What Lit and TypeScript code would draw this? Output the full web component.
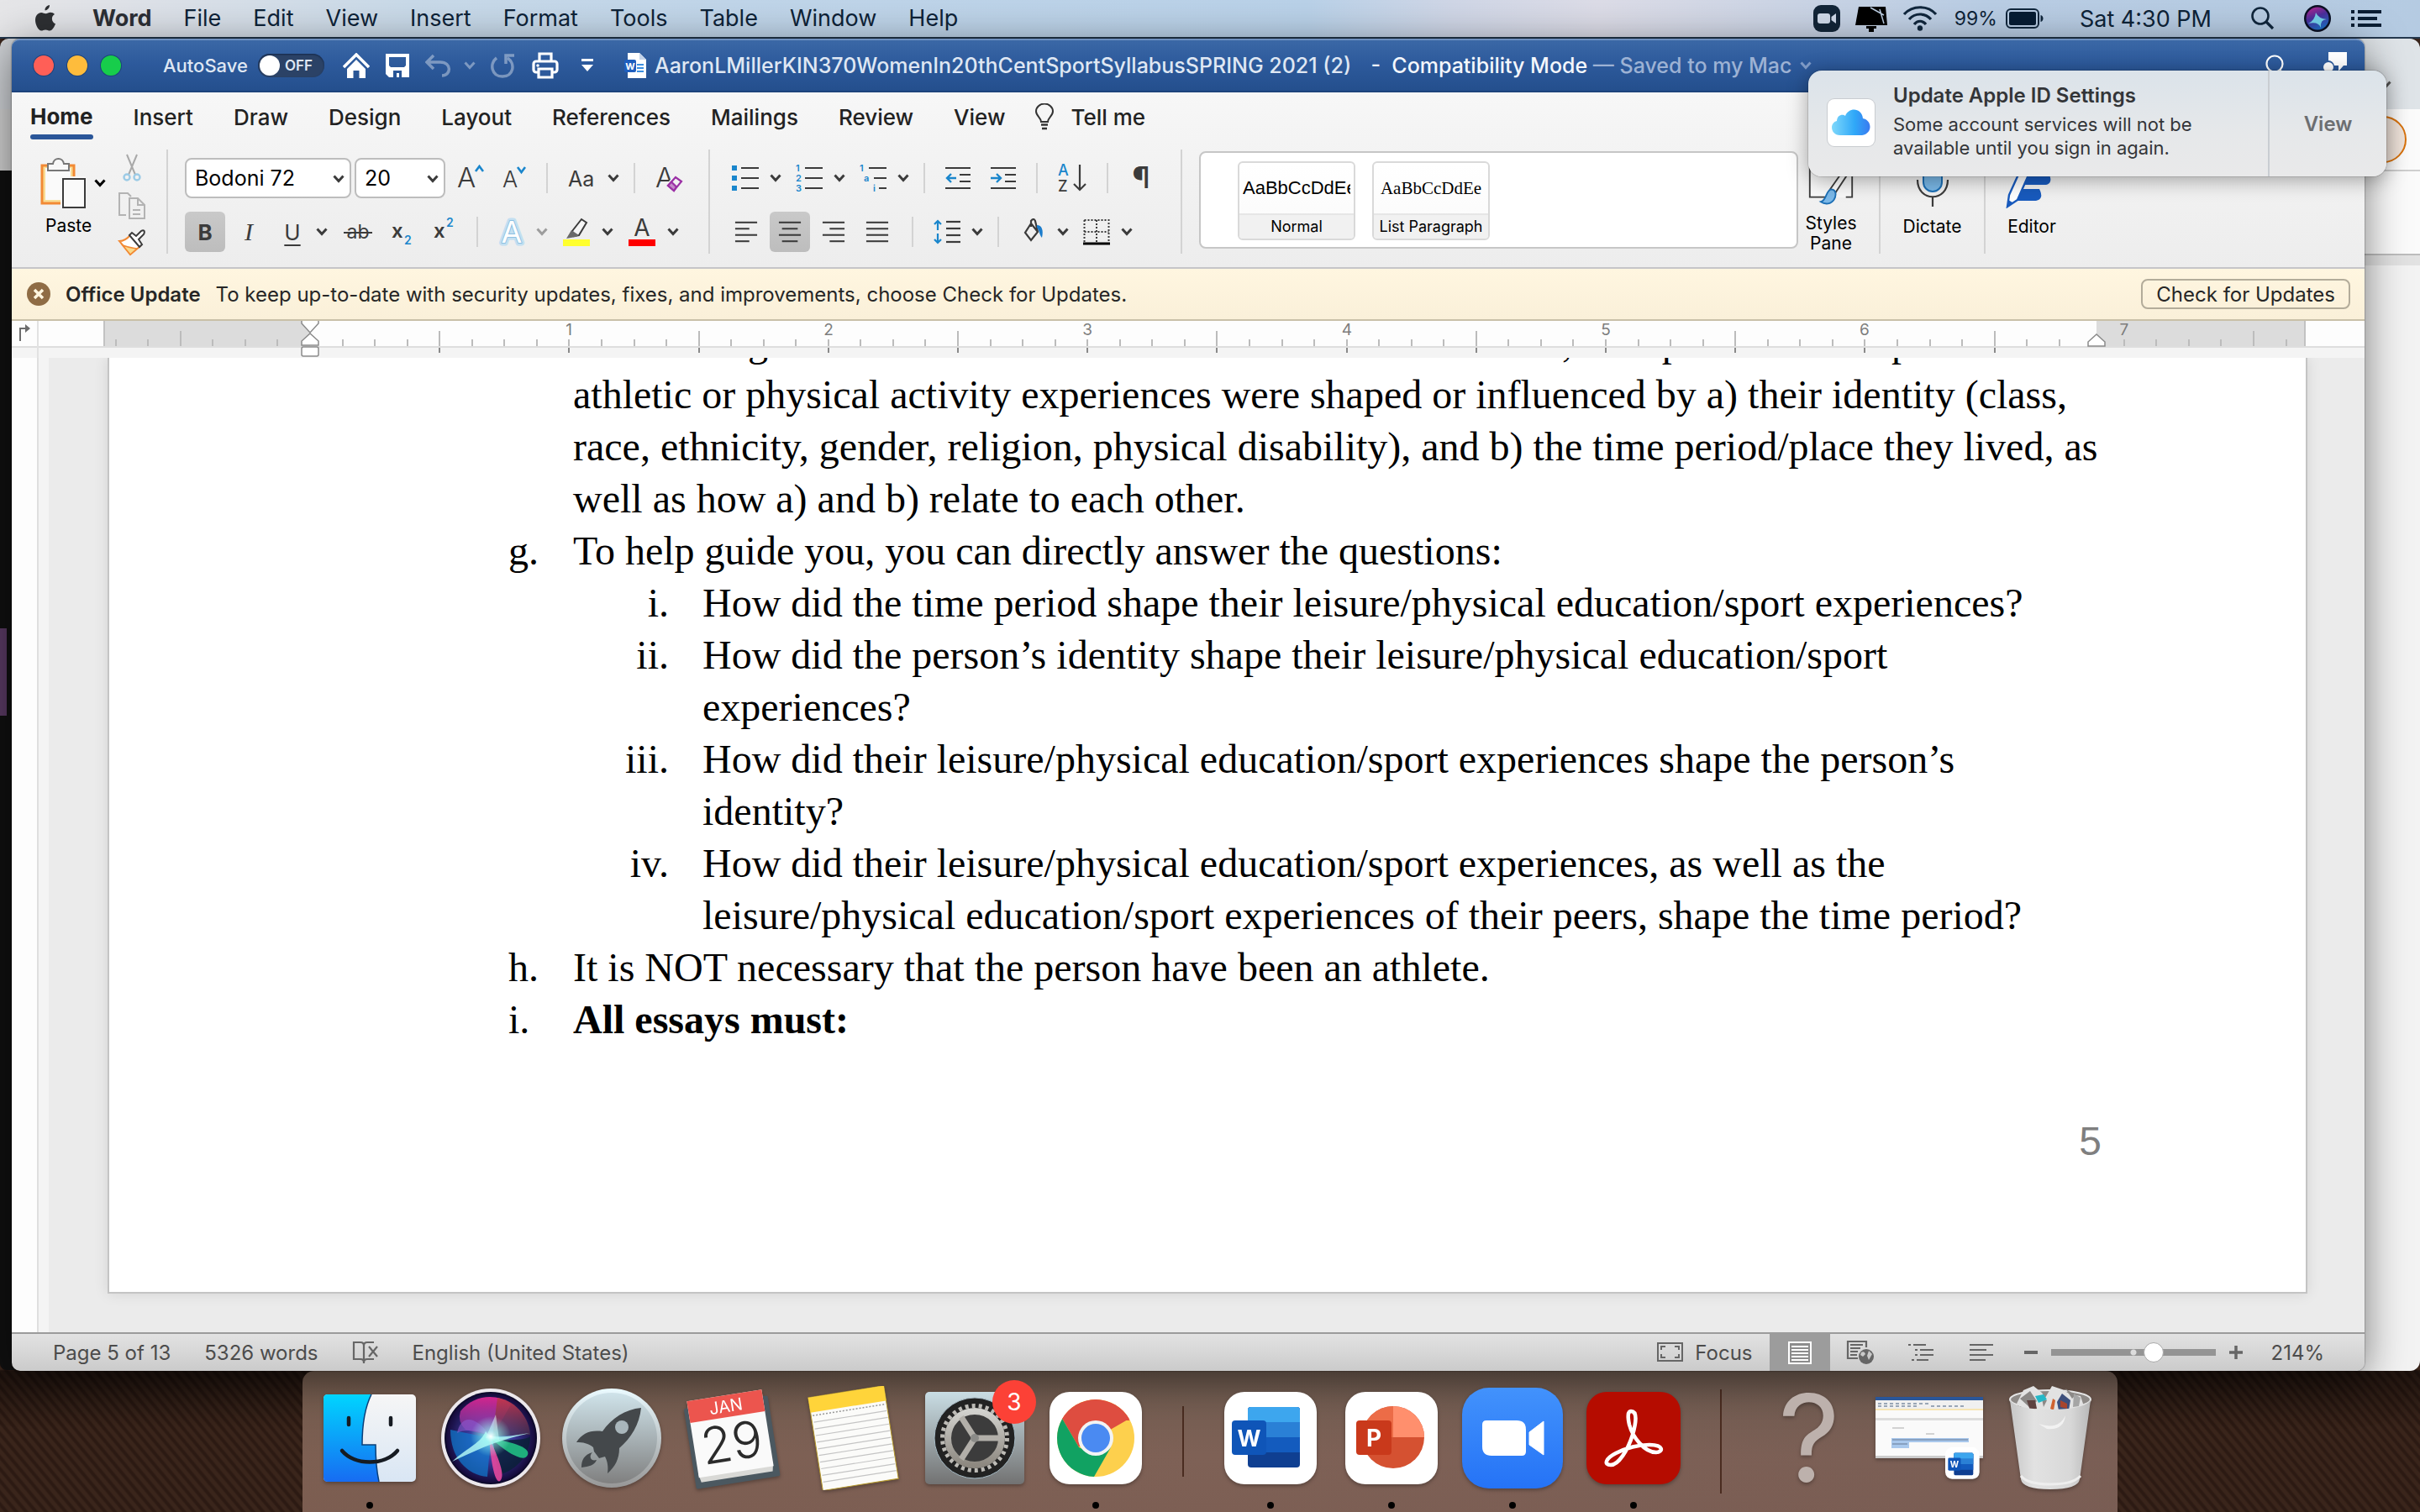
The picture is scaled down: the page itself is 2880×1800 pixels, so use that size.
import { LitElement, html, svg, css } from "lit";
import { customElement } from "lit/decorators.js";

const chev = html`<svg class="chev" width="14" height="10" viewBox="0 0 14 10"><path d="M1.5 1.5 7 7.5 12.5 1.5" fill="none" stroke="currentColor" stroke-width="3" /></svg>`;
const BLUE = "#1a86cc";
const INK = "#3b3b3b";

/* ---------- menu bar ---------- */
@customElement("menu-bar")
class MenuBar extends LitElement {
  static styles = css`
    :host { display: block; font-family: Inter, "Liberation Sans", sans-serif; }
    .bar { display: flex; align-items: center; height: 44px; padding: 0 46px 0 40px; color: #0e2338;
      border-bottom: 2px solid #24384e;
      background: linear-gradient(90deg, #e6e6e8 0%, #dfe2e8 5%, #c8d9e8 17%, #c0d5e9 30%, #b9d1e8 54%, #cfd6e6 60%, #dcdce7 66%, #cdd5e5 73%, #b9cde4 82%, #b5cbe2 100%); }
    nav { display: flex; align-items: center; gap: 38px; flex: 1; }
    button { all: unset; font-size: 27px; line-height: 44px; white-space: nowrap; display: block; }
    .app { font-weight: 700; color: #2c2f35; }
    .logo { margin-right: 4px; height: 44px; display: flex; align-items: center; }
    .right { display: flex; align-items: center; }
    .pct { font-size: 23px; margin-left: 20px; margin-right: 10px; }
    .clock { font-size: 27px; margin: 0 46px 0 42px; white-space: nowrap; }
    svg { display: block; }
    .gap { margin-left: 18px; }
    .sir { margin: 0 24px 0 34px; }
  `;
  render() {
    const items = ["File", "Edit", "View", "Insert", "Format", "Tools", "Table", "Window", "Help"];
    return html`<div class="bar">
      <nav>
        <button class="logo" aria-label="Apple menu"><svg width="28" height="34" viewBox="0 0 28 34"><path fill="#2e3033" d="M19 1c.3 3-2.4 6.400-5.500 6.300C13.200 4.400 16 1.200 19 1zM25 12c-2 1.300-3.200 3.100-3.100 5.400.1 2.900 1.700 4.800 4.100 5.800-.9 3-3.800 8.300-6.800 8.300-1.900 0-2.600-1.100-5-1.100s-3.200 1.100-5 1.100C5.600 31.500 2 24.400 2 19c0-5.500 3.300-9.100 7.200-9.100 2.100 0 3.500 1.300 5.300 1.300 1.700 0 3.200-1.400 5.600-1.400 1.900 0 3.700.8 4.900 2.200z"/></svg></button>
        <button class="app">Word</button>
        ${items.map((t) => html`<button>${t}</button>`)}
      </nav>
      <div class="right">
        <svg width="32" height="32" viewBox="0 0 32 32"><rect width="32" height="32" rx="9" fill="#122538"/><rect x="5" y="10" width="15" height="12" rx="3" fill="#cfdaea"/><path d="M21.500 14 27 10v12l-5.500-4z" fill="#cfdaea"/></svg>
        <svg class="gap" width="38" height="32" viewBox="0 0 38 32"><path d="M4 2h32l2 22H0z" fill="#000"/><path d="M13 25h12v3h-3v4h-6v-4h-3z" fill="#000"/><path d="M18 3 34 12M29 5l5 17" stroke="#b9cbe0" stroke-width="1.500" fill="none"/></svg>
        <svg class="gap" width="42" height="30" viewBox="0 0 42 30"><g fill="none" stroke="#10263c" stroke-width="3.200"><path d="M2 10C12-1 30-1 40 10"/><path d="M8 16C15 8 27 8 34 16"/><path d="M14 22c4-5 10-5 14 0"/></g><circle cx="21" cy="26.500" r="3.200" fill="#10263c"/></svg>
        <span class="pct">99%</span>
        <svg width="46" height="24" viewBox="0 0 46 24"><rect x="1" y="1" width="38" height="22" rx="5" fill="none" stroke="#10263c" stroke-width="2"/><rect x="4" y="4" width="32" height="16" rx="2" fill="#071c33"/><path d="M41.500 8c4 1 4 7 0 8z" fill="#10263c"/></svg>
        <span class="clock">Sat 4:30 PM</span>
        <svg width="30" height="30" viewBox="0 0 30 30"><circle cx="12" cy="12" r="9.500" fill="none" stroke="#10263c" stroke-width="2.600"/><path d="m19 19 8 8" stroke="#10263c" stroke-width="3.200"/></svg>
        <svg class="sir" width="32" height="32" viewBox="0 0 32 32"><defs><linearGradient id="s" x1=".2" y1="0" x2=".6" y2="1"><stop offset="0" stop-color="#b0268f"/><stop offset=".45" stop-color="#4a2f9c"/><stop offset="1" stop-color="#1d6fc8"/></linearGradient></defs><circle cx="16" cy="16" r="16" fill="#0a1024"/><circle cx="16" cy="16" r="13.500" fill="url(#s)"/><path d="M5 22q8-4 9-13 3 7 13 8-8 0-7 10-3-8-15-5z" fill="#7feaf5" opacity=".85"/></svg>
        <svg width="36" height="22" viewBox="0 0 36 22"><g fill="#0a1e34"><path d="M0 1h4v4H0zM8 1h28v4H8zM0 9h4v4H0zM8 9h23v4H8zM0 17h4v4H0zM8 17h28v4H8z"/></g></svg>
      </div>
    </div>`;
  }
}

/* ---------- window title bar ---------- */
@customElement("title-bar")
class TitleBar extends LitElement {
  static styles = css`
    :host { display: block; font-family: Inter, "Liberation Sans", sans-serif; }
    .bar { height: 64px; box-sizing: border-box; display: flex; align-items: center; padding: 0 20px 0 26px; color: #dfe7f3;
      background: linear-gradient(#3b68a6, #2d5a9c 45%, #244f8d); border-top: 2px solid #6d8fbf; border-bottom: 2px solid #1d437c; border-radius: 10px 10px 0 0; }
    button { all: unset; display: block; }
    svg { display: block; }
    .lights { display: flex; gap: 16px; }
    .light { width: 24px; height: 24px; border-radius: 50%; box-shadow: 0 0 0 1px #1e437a; }
    .r { background: #ff5f57; } .y { background: #febc3c; } .g { background: #17cd4b; }
    .auto { display: flex; align-items: center; gap: 12px; margin-left: 50px; font-size: 22px; font-weight: 500; }
    .toggle { appearance: none; margin: 0; width: 79px; height: 28px; border-radius: 14px; background: #2b4266; position: relative; box-shadow: inset 0 1px 2px #14284a; }
    .toggle::before { content: ""; position: absolute; left: 2px; top: 2px; width: 24px; height: 24px; border-radius: 50%; background: #fff; }
    .toggle::after { content: "OFF"; position: absolute; left: 32px; top: 0; font: 600 17px/28px Inter, sans-serif; color: #dfe7f3; }
    .quick { display: flex; align-items: center; gap: 19px; margin-left: 22px; color: #fff; }
    .quick .chev { margin: 0 -1px 0 -5px; }
    .dim { opacity: .38; }
    .quick .last { margin-left: 7px; }
    .title { display: flex; align-items: center; margin-left: 36px; font-size: 25px; font-weight: 500; white-space: pre; flex: 1; }
    .title .doc { margin-right: 10px; }
    .strong { font-weight: 500; color: #f4f7fc; margin-left: 10px; }
    .saved { color: #9db2d4; font-weight: 500; margin-right: 10px; }
    .title .chev { color: #7f9bc7; }
    .end { display: flex; align-items: center; gap: 44px; }
  `;
  render() {
    return html`<div class="bar">
      <div class="lights"><button class="light r" aria-label="Close"></button><button class="light y" aria-label="Minimise"></button><button class="light g" aria-label="Zoom window"></button></div>
      <label class="auto">AutoSave<input class="toggle" type="checkbox" /></label>
      <div class="quick">
        <button aria-label="Home"><svg width="32" height="30" viewBox="0 0 32 30"><path d="M1 17 16 2l15 15" fill="none" stroke="#fff" stroke-width="3.500"/><path d="M5 19 16 8l11 11v11h-7.500v-9h-7v9H5z" fill="#fff"/></svg></button>
        <button aria-label="Save"><svg width="28" height="28" viewBox="0 0 28 28"><path d="M0 0h28v28H4l-4-4zM4 4v10l2 2h16l2-2V4zM9 20v8h4v-5h3v5h3v-8z" fill="#fff" fill-rule="evenodd"/></svg></button>
        <button class="dim" aria-label="Undo"><svg width="32" height="28" viewBox="0 0 32 28"><path d="M10 2 2 10l8 8M3 10h15c14 0 13 16 2 16" fill="none" stroke="#fff" stroke-width="3.500"/></svg></button>
        <button class="dim" aria-label="Undo options">${chev}</button>
        <button class="dim" aria-label="Redo"><svg width="30" height="30" viewBox="0 0 30 30"><path d="M7 6C-2 13 1 28 14 28s16-15 6-22" fill="none" stroke="#fff" stroke-width="3.500"/><path d="M18 13V3h10" fill="none" stroke="#fff" stroke-width="3.500"/></svg></button>
        <button aria-label="Print"><svg width="32" height="32" viewBox="0 0 32 32"><g fill="none" stroke="#fff" stroke-width="3.200"><path d="M9 11V2h14v9"/><rect x="2" y="11" width="28" height="13" rx="3"/><path d="M8 20h16v10H8z" fill="#2d5a9c"/></g><circle cx="7" cy="16" r="1.800" fill="#fff"/></svg></button>
        <button class="last" aria-label="Customise toolbar"><svg width="16" height="16" viewBox="0 0 16 16"><path d="M1 0h14v3H1zM1 7h14l-7 8z" fill="#fff"/></svg></button>
      </div>
      <div class="title">
        <svg class="doc" width="26" height="30" viewBox="0 0 26 30"><path d="M4 0h14l8 8v22H4z" fill="#fff"/><path d="M18 0v8h8z" fill="#c4d4ea"/><path d="M15 14h8M15 18h8M15 22h8" stroke="#3c8fe0" stroke-width="2"/><rect y="8" width="14" height="15" rx="2" fill="#1f5fbf"/><text x="7" y="20" text-anchor="middle" font-family="Inter" font-weight="700" font-size="11" fill="#fff">W</text></svg><span>AaronLMillerKIN370WomenIn20thCentSportSyllabusSPRING 2021 (2)</span><span class="strong">  -  Compatibility Mode</span><span class="saved"> — Saved to my Mac</span>${chev}
      </div>
      <div class="end">
        <button aria-label="Search"><svg width="24" height="26" viewBox="0 0 24 26"><circle cx="11" cy="11" r="9.500" fill="none" stroke="#fff" stroke-width="2.200"/><path d="m17 18 6 7" stroke="#fff" stroke-width="2.400"/></svg></button>
        <button aria-label="Comments"><svg width="30" height="40" viewBox="0 0 30 40"><path d="M7 4h22v16h-4l-6 7v-7h-5a8 8 0 0 0-7-6z" fill="#fff"/><circle cx="7" cy="22" r="6" fill="#fff"/></svg></button>
      </div>
    </div>`;
  }
}

/* ---------- ribbon ---------- */
const lines = (rows: [number, number][], x0 = 0) =>
  svg`${rows.map(([a, b], i) => svg`<path d=${`M${x0 + a} ${3 + i * 8}H${x0 + b}`} stroke=${INK} stroke-width="2.200" />`)}`;

const ic = {
  grow: html`<svg width="32" height="40" viewBox="0 0 32 40"><text x="0" y="31" font-family="Inter" font-weight="300" font-size="33" fill=${INK}>A</text><path d="m22 12 4.500-6 4.500 6" fill="none" stroke=${BLUE} stroke-width="2.600"/></svg>`,
  shrink: html`<svg width="28" height="40" viewBox="0 0 28 40"><text x="0" y="31" font-family="Inter" font-weight="300" font-size="27" fill=${INK}>A</text><path d="m18 7 4.500 6L27 7" fill="none" stroke=${BLUE} stroke-width="2.600"/></svg>`,
  caseIc: html`<svg width="34" height="40" viewBox="0 0 34 40"><text x="0" y="30" font-family="Inter" font-size="25" fill=${INK}>Aa</text></svg>`,
  eraser: html`<svg width="34" height="40" viewBox="0 0 34 40"><text x="0" y="31" font-family="Inter" font-weight="300" font-size="33" fill=${INK}>A</text><path d="m13 28 10-13 9 6-10 14z" fill="#f2f2f2"/><path d="m15 29 9-10 7 5-9 11z" fill="#f2f2f2" stroke="#9b2fa5" stroke-width="2.200"/><path d="m15 29 4-4.500 6 6L22 35z" fill="#c38bc8" stroke="#9b2fa5" stroke-width="2.200"/></svg>`,
  ab: html`<svg width="34" height="36" viewBox="0 0 34 36"><text x="17" y="26" text-anchor="middle" font-family="Inter" font-size="23" fill=${INK}>ab</text><path d="M0 19h34" stroke=${INK} stroke-width="2"/></svg>`,
  sub: html`<svg width="30" height="42" viewBox="0 0 30 42"><text x="3" y="28" font-family="Inter" font-weight="600" font-size="24" fill=${INK}>x</text><text x="18" y="36" font-family="Inter" font-weight="600" font-size="14" fill=${BLUE}>2</text></svg>`,
  sup: html`<svg width="30" height="42" viewBox="0 0 30 42"><text x="3" y="28" font-family="Inter" font-weight="600" font-size="24" fill=${INK}>x</text><text x="18" y="15" font-family="Inter" font-weight="600" font-size="14" fill=${BLUE}>2</text></svg>`,
  fx: html`<svg width="32" height="40" viewBox="0 0 32 40"><g font-family="Inter" font-size="36" text-anchor="middle" stroke-linejoin="round"><text x="16" y="33" fill="#fff" stroke="#c3dff1" stroke-width="7">A</text><text x="16" y="33" fill="#fff" stroke="#8cc0e2" stroke-width="2">A</text><text x="16" y="33" fill="#fff">A</text></g></svg>`,
  hi: html`<svg width="34" height="34" viewBox="0 0 34 34"><path d="m12 16 11-14 6 4-9 15-6 1z" fill="#f6f6f6" stroke=${INK} stroke-width="2"/><path d="m11 15 9 6-4 2-11 2z" fill="#6a6a6a"/><rect x="1" y="26" width="32" height="8" fill="#ffff2e"/></svg>`,
  fc: html`<svg width="34" height="34" viewBox="0 0 34 34"><text x="17" y="22" text-anchor="middle" font-family="Inter" font-weight="400" font-size="28" fill=${INK}>A</text><rect x="1" y="26" width="32" height="8" fill="#fe0000"/></svg>`,
  bullets: html`<svg width="32" height="32" viewBox="0 0 32 32"><path d="M0 1h6v6H0zM0 13h6v6H0zM0 25h6v6H0z" fill=${BLUE}/><path d="M11 4h21M11 16h21M11 28h21" stroke=${INK} stroke-width="2.200"/></svg>`,
  nums: html`<svg width="32" height="40" viewBox="0 0 32 40"><g font-family="Inter" font-weight="600" font-size="11" fill=${BLUE}><text x="0" y="12">1</text><text x="0" y="24">2</text><text x="0" y="36">3</text></g><path d="M11 8h21M11 20h21M11 32h21" stroke=${INK} stroke-width="2.200"/></svg>`,
  multi: html`<svg width="32" height="40" viewBox="0 0 32 40"><g font-family="Inter" font-weight="600" font-size="11" fill=${BLUE}><text x="0" y="12">1</text><text x="5" y="24">a</text><text x="16" y="36">i</text></g><path d="M11 8h21M17 20h15M23 32h9" stroke=${INK} stroke-width="2.200"/></svg>`,
  outdent: html`<svg width="30" height="28" viewBox="0 0 30 28"><path d="M0 2h30M17 10h13M17 18h13M0 26h30" stroke=${INK} stroke-width="2.200"/><path d="M13 14H2M7 9l-5 5 5 5" fill="none" stroke=${BLUE} stroke-width="2.400"/></svg>`,
  indent: html`<svg width="30" height="28" viewBox="0 0 30 28"><path d="M0 2h30M17 10h13M17 18h13M0 26h30" stroke=${INK} stroke-width="2.200"/><path d="M0 14h12M7 9l5 5-5 5" fill="none" stroke=${BLUE} stroke-width="2.400"/></svg>`,
  sort: html`<svg width="34" height="40" viewBox="0 0 34 40"><text x="0" y="17" font-family="Inter" font-weight="500" font-size="18" fill=${BLUE}>A</text><text x="0" y="36" font-family="Inter" font-weight="500" font-size="18" fill=${INK}>Z</text><path d="M26 4v30M19 27l7 7 7-7" fill="none" stroke=${INK} stroke-width="2.200"/></svg>`,
  para: html`<svg width="32" height="44" viewBox="0 0 32 44"><text x="15" y="34" text-anchor="middle" font-family="Inter" font-weight="500" font-size="36" fill=${INK}>¶</text></svg>`,
  left: html`<svg width="28" height="28" viewBox="0 0 28 30">${lines([[0, 28], [0, 18], [0, 28], [0, 18]])}</svg>`,
  center: html`<svg width="28" height="28" viewBox="0 0 28 30">${lines([[0, 28], [4, 24], [0, 28], [4, 24]])}</svg>`,
  right: html`<svg width="28" height="28" viewBox="0 0 28 30">${lines([[0, 28], [9, 28], [0, 28], [9, 28]])}</svg>`,
  just: html`<svg width="28" height="28" viewBox="0 0 28 30">${lines([[0, 28], [0, 28], [0, 28], [0, 28]])}</svg>`,
  spacing: html`<svg width="32" height="30" viewBox="0 0 32 30">${lines([[0, 17], [0, 17], [0, 17], [0, 17]], 15)}<path d="M5 2v26M1 6l4-4 4 4M1 24l4 4 4-4" fill="none" stroke=${BLUE} stroke-width="2.200"/><path d="M3 13h4v4H3z" fill="#f0f0f0"/></svg>`,
  bucket: html`<svg width="32" height="32" viewBox="0 0 32 32"><path d="m14 6-7 11 7 9 8-10zM14 10V3q3-4 5 0l3 13" fill="none" stroke=${INK} stroke-width="2.200"/><path d="M21 8c6 0 8 6 6 15-3-3-3-9-6-12z" fill="#1c7dcc"/></svg>`,
  borders: html`<svg width="32" height="32" viewBox="0 0 32 32"><path d="M1.500 2h29v26M1.500 2v26M16 2v26M1.500 16h29" fill="none" stroke=${INK} stroke-width="2" stroke-dasharray="2 2"/><path d="M0 30h32" stroke="#000" stroke-width="3"/></svg>`,
};

@customElement("ribbon-panel")
class RibbonPanel extends LitElement {
  static styles = css`
    :host { display: block; font-family: Inter, "Liberation Sans", sans-serif; color: #222; }
    .ribbon { background: linear-gradient(#f7f7f7, #f2f2f2 45%, #ededed); height: 210px; box-sizing: border-box; border-bottom: 2px solid #c5c5c8; display: flex; flex-direction: column; }
    button { all: unset; display: flex; align-items: center; justify-content: center; box-sizing: border-box; }
    svg { display: block; }
    .tabs { display: flex; gap: 48px; padding: 0 22px; height: 68px; align-items: flex-start; font-size: 26px; font-weight: 500; }
    .tabs button { height: 56px; padding-top: 2px; white-space: nowrap; }
    .tabs .on { font-weight: 700; padding-top: 0; flex-direction: column; justify-content: flex-end; gap: 4px; }
    .tabs .on::after { content: ""; width: 100%; height: 6px; border-radius: 3px; background: #2a5699; }
    .tabs .on span { line-height: 34px; }
    .tabs .tell { gap: 20px; margin-left: -12px; }
    .groups { display: flex; height: 124px; color: #3b3b3b; }
    .grp { display: flex; flex-direction: column; justify-content: space-between; padding: 10px 0 2px; border-left: 2px solid #d3d3d3; box-sizing: border-box; }
    .row { display: flex; align-items: center; height: 48px; }
    .paste { width: 184px; display: flex; }
    .pastebtn { flex-direction: column; align-items: flex-start; justify-content: flex-start; padding: 10px 0 0 34px; width: 116px; font-size: 21px; color: #000; }
    .pi { display: flex; align-items: center; gap: 10px; }
    .pastebtn span { line-height: 26px; margin-top: 8px; margin-left: 6px; }
    .clip { display: flex; flex-direction: column; gap: 11px; padding: 5px 0 0 10px; align-items: center; }
    .font { padding-left: 20px; width: 645px; }
    .par { width: 562px; padding-left: 19px; }
    .par .first { padding-left: 7px; }
    .selw { position: relative; display: flex; margin-right: 4px; }
    .selw .chev { position: absolute; right: 8px; top: 20px; pointer-events: none; }
    select { appearance: none; height: 48px; border: 2px solid #bdbdbd; border-radius: 8px; background: #fff; font: 400 25px Inter, sans-serif; color: #000; padding: 0 10px; margin: 0; }
    .s1 { width: 198px; } .s2 { width: 108px; }
    .split { display: flex; align-items: center; gap: 13px; }
    .faint button + button { opacity: .45; }
    .cl { display: flex; align-items: center; gap: 17px; }
    .wide { gap: 24px; }
    .fs { gap: 22px; margin-left: 10px; }
    .sq { width: 48px; height: 48px; font-size: 26px; border-radius: 6px; }
    .tight { gap: 4px; }
    .on2 { background: linear-gradient(#c9c9c9, #bdbdbd); }
    .b { font-weight: 700; }
    .i { font-family: "Liberation Serif", serif; font-style: italic; font-size: 30px; }
    .u { text-decoration: underline; text-underline-offset: 5px; }
    .gap8 { margin-right: 8px; }
    .narrow { width: 44px; }
    .sep { width: 2px; height: 36px; background: #d3d3d3; margin: 0 24px; }
    .t { margin-left: 17px; }
    .gallery { flex: 1; display: flex; gap: 20px; margin: 2px 0 6px 20px; padding: 10px 44px; border: 2px solid #c6c6c6; border-radius: 8px; background: #fff; box-sizing: border-box; }
    .gwrap { flex: 1; display: flex; border-left: 2px solid #d3d3d3; }
    .style { width: 140px; height: 94px; flex-direction: column; border: 2px solid #d9d9d9; border-radius: 6px; color: #000; background: linear-gradient(#fff, #fafafa); overflow: hidden; }
    .sample { height: 60px; width: 128px; overflow: hidden; font: 400 22px/60px "Liberation Sans", sans-serif; }
    .sample.serif { font: 400 21px/60px "Liberation Serif", serif; text-align: center; }
    .name { border-top: 2px solid #e6e6e6; background: #f1f1f1; width: 100%; text-align: center; font-size: 18px; line-height: 28px; white-space: nowrap; }
    .big { display: flex; }
    .big button { flex-direction: column; justify-content: flex-start; padding-top: 10px; font-size: 21px; line-height: 24px; color: #000; text-align: center; width: 125px; gap: 10px; border-left: 2px solid #d3d3d3; }
    .big .sty { width: 96px; border: 0; padding-right: 18px; }
    .big .ed { width: 453px; align-items: flex-start; padding-left: 24px; }
    .big .ed div { text-align: center; width: 62px; }
  `;
  split(icon: unknown, label: string, cls = "") {
    return html`<div class="split ${cls}"><button aria-label=${label}>${icon}</button><button aria-label="${label} options">${chev}</button></div>`;
  }
  render() {
    const sep = html`<span class="sep"></span>`;
    return html`<div class="ribbon">
      <div class="tabs">
        <button class="on"><span>Home</span></button>
        ${["Insert", "Draw", "Design", "Layout", "References", "Mailings", "Review", "View"].map((t) => html`<button>${t}</button>`)}
        <button class="tell"><svg width="22" height="32" viewBox="0 0 22 32"><path d="M7 22c0-5-6-7-6-12.500a10 9 0 0 1 20 0C21 15 15 17 15 22z" fill="none" stroke="#333" stroke-width="2"/><path d="M7 25.500h8M8 30h6" stroke="#333" stroke-width="2.400"/></svg>Tell me</button>
      </div>
      <div class="groups">
        <div class="paste">
          <button class="pastebtn"><div class="pi"><svg width="54" height="60" viewBox="0 0 54 60"><rect x="2" y="9" width="38" height="45" fill="#f9dc94" stroke="#f28a35" stroke-width="3"/><rect x="6" y="12" width="30" height="38" fill="#fafafa"/><path d="M9 15V7h6c1-8 12-8 13 0h6v8z" fill="#f8f8f8" stroke="#777" stroke-width="2"/><rect x="24" y="22" width="30" height="40" fill="#f8f8f8"/><rect x="27" y="25" width="26" height="34" fill="#fafafa" stroke=${INK} stroke-width="2"/></svg>${chev}</div><span>Paste</span></button>
          <div class="clip">
            <button aria-label="Cut"><svg width="22" height="34" viewBox="0 0 22 34"><path d="M5 1 15 25M17 1 7 25" stroke="#a9a9a9" stroke-width="2"/><g fill="none" stroke="#9ccbe6" stroke-width="2.400"><circle cx="5" cy="28" r="3.500"/><circle cx="17" cy="28" r="3.500"/></g></svg></button>
            <button aria-label="Copy"><svg width="34" height="34" viewBox="0 0 34 34"><path d="M10 28H2V2h10l4 4" fill="none" stroke="#b3b3b3" stroke-width="2"/><path d="M14 8h10l8 8v16H14zM24 8v8h8M18 22h9M18 27h9" fill="none" stroke="#b3b3b3" stroke-width="2"/></svg></button>
            <button aria-label="Format painter"><svg width="34" height="32" viewBox="0 0 34 32"><path d="m15 7 12 13-12 10L2 14q7 0 13-7z" fill="#fff" stroke="#f28a35" stroke-width="2"/><path d="M6 19c8 3 11 3 17 4l-8 7z" fill="#f9d98a" stroke="#f28a35" stroke-width="1.500"/><path d="m14 7 3-3 5 4 6-6c3-2 5 0 3 4l-6 6 4 6-3 3z" fill="#fff" stroke=${INK} stroke-width="2"/></svg></button>
          </div>
        </div>
        <div class="grp font">
          <div class="row">
            <span class="selw"><select class="s1" aria-label="Font"><option>Bodoni 72</option></select>${chev}</span>
            <span class="selw"><select class="s2" aria-label="Font size"><option>20</option></select>${chev}</span>
            <div class="cl fs"><button aria-label="Grow font">${ic.grow}</button><button aria-label="Shrink font">${ic.shrink}</button></div>
            ${sep}${this.split(ic.caseIc, "Change case")}<span class="sep t"></span>
            <button aria-label="Clear formatting">${ic.eraser}</button>
          </div>
          <div class="row">
            <div class="cl tight"><button class="sq on2 b">B</button><button class="sq i">I</button><button class="sq u">U</button><button class="gap8" aria-label="Underline options">${chev}</button><button class="sq" aria-label="Strikethrough">${ic.ab}</button><button class="sq" aria-label="Subscript">${ic.sub}</button><button class="sq narrow" aria-label="Superscript">${ic.sup}</button></div>
            <span class="sep t"></span>
            <div class="cl">${this.split(ic.fx, "Text effects", "faint")}${this.split(ic.hi, "Highlight")}${this.split(ic.fc, "Font colour")}</div>
          </div>
        </div>
        <div class="grp par">
          <div class="row first">
            <div class="cl">${this.split(ic.bullets, "Bullets")}${this.split(ic.nums, "Numbering")}${this.split(ic.multi, "Multilevel list")}</div>
            <span class="sep t"></span><div class="cl wide"><button aria-label="Decrease indent">${ic.outdent}</button><button aria-label="Increase indent">${ic.indent}</button></div>
            ${sep}<button aria-label="Sort">${ic.sort}</button>
            ${sep}<button aria-label="Show marks">${ic.para}</button>
          </div>
          <div class="row">
            <div class="cl tight"><button class="sq" aria-label="Align left">${ic.left}</button><button class="sq on2" aria-label="Centre">${ic.center}</button><button class="sq" aria-label="Align right">${ic.right}</button><button class="sq" aria-label="Justify">${ic.just}</button></div>
            <span class="sep t"></span>${this.split(ic.spacing, "Line spacing")}<span class="sep t"></span>
            <div class="cl">${this.split(ic.bucket, "Shading")}${this.split(ic.borders, "Borders")}</div>
          </div>
        </div>
        <div class="gwrap"><div class="gallery">
          <button class="style"><div class="sample">AaBbCcDdEe</div><div class="name">Normal</div></button>
          <button class="style"><div class="sample serif">AaBbCcDdEe</div><div class="name">List Paragraph</div></button>
        </div></div>
        <div class="big">
          <button class="sty"><svg width="58" height="60" viewBox="0 0 58 60"><path d="M22 50H2V2h54v48h-8" fill="#f8f8f8" stroke=${INK} stroke-width="2"/><path d="m28 40 28-40 4 6-25 38z" fill="#fff" stroke=${INK} stroke-width="2"/><path d="M16 56c8-2 6-14 13-16 7 0 7 8 4 13-4 6-11 7-17 3z" fill="#7bb8e8" stroke="#1c6fb5" stroke-width="2"/></svg>Styles<br />Pane</button>
          <button><svg width="40" height="60" viewBox="0 0 40 60"><rect x="9" y="-10" width="22" height="50" rx="11" fill="#79b7e6" stroke="#1c6fb5" stroke-width="2"/><path d="M2 26c0 27 36 27 36 0M20 46v12" fill="none" stroke=${INK} stroke-width="2.200"/></svg>Dictate</button>
          <button class="ed"><svg width="62" height="60" viewBox="0 0 62 60"><path d="M34 4h28l-4 11H34zM28 20h24q4 10-4 12H20zM20 37h20q6 12-4 14H12z" fill="#185abd"/><path d="m24 0 12 0L14 50 2 58 4 44z" fill="#fff" stroke="#185abd" stroke-width="2.400"/><path d="m3 50 5 3-6 5z" fill="#185abd"/></svg><div>Editor</div></button>
        </div>
      </div>
    </div>`;
  }
}

/* ---------- ruler ---------- */
@customElement("doc-ruler")
class DocRuler extends LitElement {
  static styles = css`
    :host { display: block; }
    svg { display: block; width: 100%; background: #f4f4f4; }
  `;
  render() {
    const inch = 308.4, zero = 355;
    const ticks = [];
    for (let i = -6; i <= 61; i++) {
      const x = Math.round(zero + (i * inch) / 8);
      if (i === 0) continue;
      const half = Math.abs(i % 8) === 4;
      ticks.push(svg`<path d=${`M${x} ${half ? 12 : 22}V30`} stroke="#bcbcbc" stroke-width="2" />`);
      if (i > 0 && i % 4 === 0 && i < 55) ticks.push(svg`<path d=${`M${x} 32V38`} stroke="#8a8a8a" stroke-width="2" />`);
    }
    return html`<svg height="44" viewBox="0 0 2800 44" preserveAspectRatio="xMinYMin slice">
      <rect width="2800" height="30" fill="#fdfdfd" /><rect y="30" width="2800" height="2" fill="#dedede" />
      <rect x="109" width="246" height="30" fill="#dcdcdc" /><rect x="2481" width="249" height="30" fill="#dcdcdc" />
      <path d="M110 0V30M2729 0V30" stroke="#c2c2c2" stroke-width="2" />
      <path d="M31 0V44" stroke="#e2e2e2" stroke-width="2" />
      <path d="M10 24V9h8" fill="none" stroke="#6c6c6c" stroke-width="2" /><path d="m16 4 6 5-6 5z" fill="#6c6c6c" />
      ${ticks}
      ${[1, 2, 3, 4, 5, 6, 7].map((n) => svg`<text x=${Math.round(zero + n * inch)} y="17" text-anchor="middle" font-family="Inter, sans-serif" font-size="19" fill="#7d7d7d">${n}</text>`)}
      <g fill="#fff" stroke="#8a8a8a" stroke-width="1.500"><path d="M345 0v3l10 11 10-11V0M345 29v-5l10-9 10 9v5z" /><rect x="345" y="31" width="20" height="11" rx="2" /><path d="M2471 30v-5l10-9 10 9v5z" /></g>
    </svg>`;
  }
}

/* ---------- document ---------- */
@customElement("doc-view")
class DocView extends LitElement {
  static styles = css`
    :host { display: flex; flex: 1; min-height: 0; overflow: hidden; }
    .vr { width: 30px; background: #fdfdfd; border-right: 2px solid #dfdfdf; }
    .strip { width: 12px; background: #f4f4f4; }
    .canvas { flex: 1; display: flex; background: #ebebeb; padding: 0 68px 0 70px; overflow: hidden; }
    .page { flex: 1; margin-bottom: 46px; border: 2px solid #c4c4c4; border-top: 0; background: #fff; box-shadow: 0 0 16px rgba(0,0,0,.1); padding: 0 243px 0 475px; display: flex; flex-direction: column;
      font-family: "Liberation Serif", "Times New Roman", serif; font-size: 48px; line-height: 62px; color: #000; white-space: nowrap; }
    .body { display: grid; grid-template-columns: 77px 1fr; }
    .head { margin-top: -49px; }
    .sub { display: grid; grid-template-columns: 191px 1fr; column-gap: 40px; }
    .mk { text-align: right; }
    b { font-weight: 700; }
    .num { margin-top: auto; text-align: right; color: #7f7f7f; font: 400 48px/58px "Liberation Sans", sans-serif; padding-bottom: 150px; }
  `;
  render() {
    return html`<div class="vr"></div><div class="strip"></div><div class="canvas"><div class="page">
      <div class="body head">
        <span></span><div>surrounding culture and events between them.  In other words, to explain how the person’s<br />athletic or physical activity experiences were shaped or influenced by a) their identity (class,<br />race, ethnicity, gender, religion, physical disability), and b) the time period/place they lived, as<br />well as how a) and b) relate to each other.</div>
        <span>g.</span><div>To help guide you, you can directly answer the questions:</div>
      </div>
      <div class="sub">
        <span class="mk">i.</span><div>How did the time period shape their leisure/physical education/sport experiences?</div>
        <span class="mk">ii.</span><div>How did the person’s identity shape their leisure/physical education/sport<br />experiences?</div>
        <span class="mk">iii.</span><div>How did their leisure/physical education/sport experiences shape the person’s<br />identity?</div>
        <span class="mk">iv.</span><div>How did their leisure/physical education/sport experiences, as well as the<br />leisure/physical education/sport experiences of their peers, shape the time period?</div>
      </div>
      <div class="body">
        <span>h.</span><div>It is NOT necessary that the person have been an athlete.</div>
        <span>i.</span><div><b>All essays must:</b></div>
      </div>
      <div class="num">5</div>
    </div></div>`;
  }
}

/* ---------- status bar ---------- */
@customElement("status-bar")
class StatusBar extends LitElement {
  static styles = css`
    :host { display: block; font-family: Inter, "Liberation Sans", sans-serif; }
    .bar { display: flex; align-items: center; height: 44px; border-top: 2px solid #9b9b9b; background: linear-gradient(#e2e2e2, #cbcbcb); color: #4c4c4c; font-size: 24px; padding: 0 48px 0 49px; white-space: nowrap; border-radius: 0 0 10px 10px; }
    button { all: unset; display: flex; align-items: center; gap: 14px; }
    svg { display: block; }
    .lft { display: flex; align-items: center; gap: 40px; flex: 1; }
    .view { width: 72px; height: 44px; justify-content: center; }
    .on { background: #9c9c9c; margin-left: 20px; }
    .zoom { display: flex; align-items: center; gap: 16px; margin: 0 34px 0 15px; }
    input { appearance: none; width: 196px; height: 24px; margin: 0; background: radial-gradient(circle at 98px 12px, #dcdcdc 3px, transparent 4px), linear-gradient(#949494, #949494) center / 100% 8px no-repeat; border-radius: 4px; }
    input::-webkit-slider-thumb { appearance: none; width: 24px; height: 24px; border-radius: 50%; background: #fff; border: 1px solid #a8a8a8; box-sizing: border-box; }
  `;
  render() {
    return html`<div class="bar">
      <div class="lft"><button>Page 5 of 13</button><button>5326 words</button>
        <button aria-label="Proofing"><svg width="32" height="28" viewBox="0 0 32 28"><path d="M14 27V6q0-4-4-4H2v20h8q4 0 4 4M14 6q0-4 4-4h8M14 26q0-4 4-4h8M20 7l10 12M30 7 20 19" fill="none" stroke="#666" stroke-width="2.200"/></svg></button>
        <button>English (United States)</button></div>
      <button><svg width="31" height="24" viewBox="0 0 31 24"><rect x="1" y="1" width="29" height="21" fill="none" stroke="#666" stroke-width="2"/><path d="M5 9V5h5M21 5h5v4M26 14v4h-5M10 18H5v-4" fill="none" stroke="#666" stroke-width="2"/></svg>Focus</button>
      <button class="view on" aria-label="Print layout"><svg width="28" height="27" viewBox="0 0 28 27"><rect x="1" y="1" width="26" height="25" fill="#8c8c8c" stroke="#fff" stroke-width="2"/><path d="M4 6h20M4 10h20M4 14h20M4 18h20M4 22h20" stroke="#fff" stroke-width="1.800"/></svg></button>
      <button class="view" aria-label="Web layout"><svg width="34" height="30" viewBox="0 0 34 30"><path d="M14 22H2V2h22v7" fill="none" stroke="#666" stroke-width="2.200"/><path d="M5 6h15M5 10h12M5 14h9M5 18h8" stroke="#666" stroke-width="2"/><circle cx="24" cy="20" r="9" fill="#666"/><path d="M18 15q4-2 5 2l-3 3-3-2zM27 13l4 4-4 7-2-5z" fill="#c9c9c9"/></svg></button>
      <button class="view" aria-label="Outline"><svg width="30" height="22" viewBox="0 0 30 22"><path d="M0 2h3M6 2h15M8 8h3M14 8h16M8 14h3M14 14h16M4 20h3M10 20h14" stroke="#666" stroke-width="2.200"/></svg></button>
      <button class="view" aria-label="Draft"><svg width="28" height="22" viewBox="0 0 28 22"><path d="M0 2h28M0 8h20M0 14h28M0 20h19" stroke="#666" stroke-width="2.200"/></svg></button>
      <div class="zoom"><button aria-label="Zoom out"><svg width="16" height="16" viewBox="0 0 16 16"><path d="M0 8h16" stroke="#666" stroke-width="4"/></svg></button><input type="range" min="0" max="100" value="64" aria-label="Zoom" /><button aria-label="Zoom in"><svg width="16" height="16" viewBox="0 0 16 16"><path d="M0 8h16M8 0v16" stroke="#666" stroke-width="3.500"/></svg></button></div>
      <span>214%</span>
    </div>`;
  }
}

/* ---------- dock ---------- */
const wordLogo = svg`<rect x="28" y="18" width="62" height="72" rx="4" fill="#0f3f91"/><path d="M28 72V22q0-4 4-4h54q4 0 4 4v50z" fill="#135bbe"/><path d="M28 54V22q0-4 4-4h54q4 0 4 4v32z" fill="#2a80d6"/><path d="M28 36V22q0-4 4-4h54q4 0 4 4v14z" fill="#3da6ee"/><rect x="9" y="34" width="41" height="41" rx="4" fill="#0f55b8"/><text x="29.500" y="65" text-anchor="middle" font-family="Inter" font-weight="700" font-size="27" fill="#fff">W</text>`;

const finder = html`<svg width="110" height="104" viewBox="0 0 110 104"><defs><linearGradient id="a" x2="0" y2="1"><stop stop-color="#00d5ff"/><stop offset="1" stop-color="#176cf2"/></linearGradient><linearGradient id="b" x2="0" y2="1"><stop stop-color="#f6f6f6"/><stop offset="1" stop-color="#d9e6f4"/></linearGradient></defs><rect width="110" height="104" rx="5" fill="url(#b)"/><path d="M5 0h52C48 18 46 40 46 60h16c0 16 1 30 4 44H5q-5 0-5-5V5q0-5 5-5z" fill="url(#a)"/><path d="M57 0C48 18 46 40 46 60h16c0 16 1 30 4 44" fill="none" stroke="#0b3f78" stroke-width="1.500"/><g fill="none" stroke="#161b22" stroke-width="4.500" stroke-linecap="round"><path d="M30 28v8M80 28v8M22 67c15 18 51 18 66 0"/></g></svg>`;
const siri = html`<svg width="120" height="120" viewBox="0 0 120 120"><defs><radialGradient id="c" cx=".5" cy=".5"><stop stop-color="#3aa0c8"/><stop offset=".5" stop-color="#3a3a9c"/><stop offset="1" stop-color="#150a3a"/></radialGradient><radialGradient id="c2"><stop stop-color="#fff"/><stop offset=".3" stop-color="#a8fff6" stop-opacity=".6"/><stop offset="1" stop-color="#a8fff6" stop-opacity="0"/></radialGradient><linearGradient id="c3" x2="0" y2="1"><stop stop-color="#d4258e"/><stop offset="1" stop-color="#7b3fae" stop-opacity=".6"/></linearGradient><linearGradient id="c4" x2="0" y2="1"><stop stop-color="#c23550"/><stop offset="1" stop-color="#4a3550" stop-opacity=".6"/></linearGradient></defs><circle cx="60" cy="60" r="59" fill="#ece8ec"/><circle cx="60" cy="60" r="55" fill="#0d0a2c"/><circle cx="60" cy="60" r="53" fill="url(#c)"/><path d="M24 28C40 8 68 6 84 20L62 58 30 50q-10-10-6-22z" fill="url(#c3)"/><path d="M68 12c24 4 38 26 39 44L62 58z" fill="url(#c4)"/><path d="M62 60c20 4 40 2 45-2 0 20-14 40-38 46z" fill="#0b2038" opacity=".85"/><path d="M12 50c0 34 20 54 44 56L60 60z" fill="#1176c9" opacity=".75"/><path d="M60 60C80 64 108 70 104 80S80 78 60 60z" fill="#1fae7c"/><path d="M58 58c8 20 20 44 14 52s-12-20-14-52z" fill="#e5489e" opacity=".9"/><path d="M60 58C40 30 24 34 20 54c10-6 30-2 40 4z" fill="#8c5ad0" opacity=".6"/><path d="M14 88C34 70 48 66 54 52c4 6 6 10 52 2-30 8-42 10-92 34z" fill="#b9fff8" opacity=".8"/><path d="M54 60 66 32l4 30z" fill="#eaf6ff" opacity=".55"/><circle cx="60" cy="58" r="24" fill="url(#c2)"/></svg>`;
const rocket = html`<svg width="120" height="120" viewBox="0 0 120 120"><defs><linearGradient id="d" x2="0" y2="1"><stop stop-color="#cfe3ea"/><stop offset="1" stop-color="#808080"/></linearGradient><linearGradient id="d2" x2="0" y2="1"><stop stop-color="#eafaff"/><stop offset="1" stop-color="#979797"/></linearGradient></defs><circle cx="60" cy="60" r="59" fill="url(#d2)"/><circle cx="60" cy="60" r="54" fill="url(#d)"/><path d="M95 24C76 26 60 36 49 52c-14-2-24 2-31 13 8 0 14 1 20 6l1 5 6 8 7-2c3 6 4 12 3 20 9-8 14-17 14-30 14-12 24-28 26-48z" fill="#44484b"/><circle cx="72" cy="47" r="8" fill="#a9b6bb"/><path d="M37 77c-10 3-13 9-13 18 9-1 16-3 18-9-4 1-6 0-7-2-1-3 0-5 2-7z" fill="#44484b"/></svg>`;
const calendar = html`<svg width="124" height="124" viewBox="0 0 124 124"><g transform="translate(-4 1) rotate(-9 62 62)"><rect x="14" y="18" width="101" height="97" rx="2" fill="#4b5860"/><path d="M19 98h90l-2 10H21z" fill="#d9d9d6"/><rect x="19" y="10" width="90" height="92" fill="#fafafa"/><rect x="19" y="10" width="90" height="26" fill="#ec554e"/><text x="64" y="30" text-anchor="middle" font-family="Inter" font-size="20" fill="#fff">JAN</text><text x="64" y="88" text-anchor="middle" font-family="Inter" font-weight="300" font-size="60" fill="#2b2b2b">29</text></g></svg>`;
const notes = html`<svg width="124" height="124" viewBox="0 0 124 124"><g transform="rotate(-9 62 62)"><rect x="16" y="6" width="91" height="112" fill="#fbfbf9" stroke="#b79a2c"/><rect x="16" y="6" width="91" height="18" fill="#ffd43a"/><path d="M18 28h88" stroke="#999" stroke-width="1.500" stroke-dasharray="2 2"/>${[36, 44, 52, 60, 68, 76, 84, 92, 100, 108].map((y) => svg`<path d=${`M18 ${y}h88`} stroke="#c4c4c4" stroke-width="1.200"/>`)}</g></svg>`;
const settings = html`<svg width="118" height="110" viewBox="0 0 118 110"><defs><linearGradient id="e" x2="0" y2="1"><stop stop-color="#c9dde4"/><stop offset="1" stop-color="#727272"/></linearGradient><linearGradient id="e2" x2="0" y2="1"><stop stop-color="#d2d2ce"/><stop offset="1" stop-color="#8d8880"/></linearGradient></defs><rect width="118" height="110" rx="5" fill="url(#e)"/><circle cx="59" cy="55" r="48" fill="#222" stroke="#a8bcc6"/><circle cx="59" cy="55" r="38.500" fill="none" stroke="#bdbbb6" stroke-width="5" stroke-dasharray="4.040 4.040"/><circle cx="59" cy="55" r="32" fill="#3c3c3c" stroke="url(#e2)" stroke-width="8"/><path d="M59 55h30M59 55 43 30M59 55 43 80" stroke="#b2afa9" stroke-width="7"/><circle cx="59" cy="55" r="5" fill="#8b8b88"/></svg>`;
const tile = (inner: unknown) => html`<svg width="110" height="110" viewBox="0 0 110 110"><rect width="110" height="110" rx="24" fill="#fff"/>${inner}</svg>`;
const chrome = tile(svg`<circle cx="55" cy="55" r="46" fill="#fdd04d"/><path d="M55 55 15.200 32A46 46 0 0 1 94.800 32z" fill="#de4d40"/><path d="M55 34h40.500A46 46 0 0 0 15.200 32L35 66z" fill="#de4d40"/><path d="M15.200 32A46 46 0 0 0 53 101L73 66 55 75 35 66z" fill="#11a262"/><circle cx="55" cy="55" r="21" fill="#f3f3f3"/><circle cx="55" cy="55" r="17" fill="#4a8af2"/>`);
const ppt = tile(svg`<circle cx="57" cy="54" r="37" fill="#d55131"/><path d="M57 17a37 37 0 0 1 37 37H57z" fill="#ff8f6d"/><path d="M57 17a37 37 0 0 0-37 37h37z" fill="#ec6c47"/><rect x="13" y="34" width="42" height="41" rx="4" fill="#c9391b"/><text x="34" y="65" text-anchor="middle" font-family="Inter" font-weight="700" font-size="28" fill="#fff">P</text>`);
const zoomApp = html`<svg width="120" height="120" viewBox="0 0 120 120"><defs><linearGradient id="f" x2="0" y2="1"><stop stop-color="#4292fc"/><stop offset="1" stop-color="#2573f6"/></linearGradient></defs><rect width="120" height="120" rx="32" fill="url(#f)"/><path d="M24 44q0-5 5-5h36q11 0 11 11v26q0 5-5 5H35q-11 0-11-11z" fill="#fff"/><path d="M80 53 97 40v40L80 68z" fill="#fff" stroke="#fff" stroke-linejoin="round"/></svg>`;
const acrobat = html`<svg width="112" height="110" viewBox="0 0 112 110"><rect width="112" height="110" rx="24" fill="#b50c00"/><path d="M53 23c8 0 6 14 2 28C49 70 38 87 29 87c-9 0-6-8 6-14 12-6 28-10 40-10 18 0 16 9 8 9-14 0-28-18-32-33-2-9-2-16 2-16z" fill="none" stroke="#fff" stroke-width="4.500"/></svg>`;
const question = html`<svg width="90" height="156" viewBox="0 0 90 156"><text x="46" y="130" text-anchor="middle" font-family="Inter" font-weight="400" font-size="144" fill="#bdb1ac">?</text></svg>`;
const preview = html`<svg width="128" height="98" viewBox="0 0 128 98"><rect width="128" height="73" fill="#fafafa"/><rect width="128" height="4" fill="#2a5699"/><rect y="4" width="128" height="10" fill="#f0f0f0"/><rect y="14" width="128" height="2" fill="#f7e5b5"/><path d="M3 8h60M3 11h48M66 11h40" stroke="#9aa6b6" stroke-width="2" stroke-dasharray="4 3"/><rect y="25" width="128" height="3" fill="#ddd"/><path d="M20 37h14M60 44h10" stroke="#aaa"/><rect x="19" y="49" width="92" height="5" fill="#a9c8ec"/><rect x="19" y="54" width="21" height="7" fill="#a9c8ec"/><path d="M20 51h90M20 56h18" stroke="#667b95"/><rect y="70" width="128" height="3" fill="#ccc"/><g transform="translate(83 60) scale(.37)"><rect width="110" height="102" rx="22" fill="#fff"/>${wordLogo}</g></svg>`;
const trash = html`<svg width="100" height="126" viewBox="0 0 100 126"><defs><linearGradient id="h" x2="1" y2="0"><stop stop-color="#c6c6c6"/><stop offset=".3" stop-color="#e2e2e2"/><stop offset=".75" stop-color="#d8d8d8"/><stop offset="1" stop-color="#b8b8b8"/></linearGradient></defs><ellipse cx="50" cy="17" rx="48" ry="11" fill="#8e8a87" stroke="#e5e5e5" stroke-width="2"/><path d="m10 22 8-16 12-5 10 8 4 6 8-14 12 4 10 6 12 2 4 12-20 9H28z" fill="#e2e2e2"/><path d="m14 16 12-9 8 12-8 8zM68 4l12 8-4 4zM40 16l6 2-4 8z" fill="#8b8886"/><path d="m22 18 10 0 2 10-8 2z" fill="#5d4240"/><path d="m32 13 10-2 4 6-10 4z" fill="#25b8c7"/><path d="m58 20 6-10 10 8-2 12-12 0z" fill="#3d4f7c"/><path d="m50 28 3-12 3 2-2 12z" fill="#cf6330"/><path d="m62 18 8 4 0 6-8-2z" fill="#a8452e"/><path d="m78 10 8 5-2 10-7 1z" fill="#a5a5a5"/><path d="M2 18 15 112q2 12 35 12t35-12L98 18Q90 29 50 29T2 18z" fill="url(#h)"/><path d="M36 46q24 8 32-10-2 18-22 16z" fill="#f2f2f2"/><path d="M15 108q8 10 35 10t36-10" fill="none" stroke="#eee" stroke-width="3"/></svg>`;

@customElement("mac-dock")
class MacDock extends LitElement {
  static styles = css`
    :host { display: flex; justify-content: center; }
    .dock { display: flex; height: 168px; padding: 0 8px; border-radius: 14px 14px 0 0; background: linear-gradient(90deg, rgba(120,88,70,.25), transparent 50%, rgba(100,80,80,.15)), linear-gradient(#6f5c50, #7e6156 60%, #7d5f54); }
    .cell { all: unset; width: 144px; height: 168px; display: grid; grid-template-rows: 160px 8px; justify-items: center; align-items: center; }
    .cell::after { content: ""; width: 8px; height: 8px; border-radius: 50%; margin-top: -8px; }
    .run::after { background: #000; }
    .sep { width: 64px; display: flex; align-items: center; justify-content: center; }
    .sep::after { content: ""; width: 2px; height: 124px; background: #4a2c20; }
    .short::after { height: 84px; }
    svg { display: block; filter: drop-shadow(0 2px 2px rgba(0,0,0,.3)); }
    .wrap { position: relative; }
    .badge { position: absolute; right: -14px; top: -14px; width: 52px; height: 52px; border-radius: 50%; background: #fc4136; color: #fff; font: 400 28px/52px Inter, sans-serif; text-align: center; }
  `;
  render() {
    const cell = (icon: unknown, label: string, run = false) => html`<button class="cell ${run ? "run" : ""}" aria-label=${label}>${icon}</button>`;
    return html`<div class="dock">
      ${cell(finder, "Finder", true)}${cell(siri, "Siri")}${cell(rocket, "Launchpad")}${cell(calendar, "Calendar")}${cell(notes, "Notes")}
      ${cell(html`<div class="wrap">${settings}<span class="badge">3</span></div>`, "System Preferences")}
      ${cell(chrome, "Chrome", true)}<span class="sep short"></span>
      ${cell(tile(wordLogo), "Word", true)}${cell(ppt, "PowerPoint", true)}${cell(zoomApp, "Zoom", true)}${cell(acrobat, "Acrobat", true)}
      <span class="sep"></span>${cell(question, "Missing item")}${cell(preview, "Minimised document")}${cell(trash, "Trash")}
    </div>`;
  }
}

/* ---------- desktop ---------- */
@customElement("app-root")
class AppRoot extends LitElement {
  static styles = css`
    :host { display: block; font-family: Inter, "Liberation Sans", sans-serif; }
    .desk { min-height: 100vh; display: flex; flex-direction: column; position: relative; overflow: hidden;
      background: linear-gradient(transparent 1630px, rgba(0,0,0,.45) 1632px, transparent 1700px), repeating-linear-gradient(50deg, #3a251b 0 3px, #2c1a13 5px 7px, #3a251b 9px); }
    .stage { flex: 1; display: flex; position: relative; padding: 0 66px 0 14px; }
    .win { flex: 1; min-width: 0; display: flex; flex-direction: column; position: relative; border-radius: 10px; box-shadow: 0 10px 50px rgba(0,0,0,.5), 0 0 2px rgba(0,0,0,.6); }
    .back { position: absolute; overflow: hidden; }
    .lw { left: 0; top: 0; width: 40px; height: 157px; border-radius: 10px 0 0 0; background: linear-gradient(#cfd2d6 84px, #d2d2d2 84px); }
    .lb { left: 0; top: 157px; bottom: 1px; width: 40px; background: #101010; border-radius: 0 0 0 8px; }
    .lp { left: 0; top: 702px; width: 8px; height: 104px; background: #5a3a63; }
    .rw { right: 0; top: 0; bottom: 0; width: 90px; border-radius: 0 12px 12px 0;
      background: linear-gradient(#dfe4e8 84px, #fbfbfb 84px 156px, #cfcfcf 156px 158px, #fbfbfb 158px 256px, #bdbdbd 256px 258px, #e2e2e2 258px 270px, #f3f3f3 270px); }
    .ring { right: 16px; top: 92px; width: 52px; height: 52px; border: 2px solid #d9730d; border-radius: 50%; background: #efe3da; }
    .rchev { position: absolute; right: 34px; top: 44px; color: #555; }
    .update { display: flex; align-items: center; height: 60px; border-bottom: 2px solid #c9c0a8; background: linear-gradient(#fff6e0, #faf0d9); color: #262626; font-size: 24px; padding: 0 17px 0 18px; white-space: nowrap; }
    .update strong { font-weight: 600; margin: 0 18px 0 18px; }
    .update p { margin: 0; flex: 1; }
    .x { all: unset; display: flex; }
    .check { font: 400 24px Inter, sans-serif; color: #262626; height: 36px; padding: 0 16px; border: 2px solid #b3ac9a; border-radius: 8px; background: transparent; display: flex; align-items: center; }
    .note { position: absolute; right: 40px; top: 84px; width: 688px; height: 126px; box-sizing: border-box; border-radius: 16px; display: flex; align-items: stretch; background: linear-gradient(#dbe3ea, #e6e8ea 60%, #e9e9ea); box-shadow: 0 4px 24px rgba(0,0,0,.35), 0 0 0 1px rgba(0,0,0,.12); color: #333538; }
    .cloud { margin: 34px 22px 0 23px; width: 56px; height: 56px; background: #fff; border-radius: 8px; box-shadow: 0 0 0 1px #c9ccd0; display: flex; align-items: center; justify-content: center; }
    .txt { flex: 1; padding-top: 14px; font-size: 22px; line-height: 28px; white-space: nowrap; }
    .txt strong { display: block; font-weight: 600; font-size: 24px; line-height: 32px; margin-bottom: 4px; }
    .nv { all: unset; width: 139px; border-left: 2px solid #c9cdd2; text-align: center; font-size: 24px; font-weight: 600; color: #6c6e71; }
  `;
  render() {
    return html`<div class="desk">
      <menu-bar></menu-bar>
      <div class="stage">
        <div class="back lw"></div><div class="back lb"></div><div class="back lp"></div>
        <div class="back rw"></div><div class="back ring"></div><div class="rchev">${chev}</div>
        <main class="win">
          <title-bar></title-bar>
          <ribbon-panel></ribbon-panel>
          <div class="update">
            <button class="x" aria-label="Dismiss"><svg width="28" height="28" viewBox="0 0 28 28"><circle cx="14" cy="14" r="14" fill="#8f6c45"/><path d="m9 9 10 10M19 9 9 19" stroke="#fff6e0" stroke-width="3.500"/></svg></button>
            <strong>Office Update</strong>
            <p>To keep up-to-date with security updates, fixes, and improvements, choose Check for Updates.</p>
            <button class="check">Check for Updates</button>
          </div>
          <doc-ruler></doc-ruler>
          <doc-view></doc-view>
          <status-bar></status-bar>
        </main>
      </div>
      <mac-dock></mac-dock>
      <aside class="note">
        <div class="cloud"><svg width="46" height="32" viewBox="0 0 46 32"><defs><linearGradient id="cl"><stop stop-color="#7fd8fb"/><stop offset=".6" stop-color="#2fa8f8"/><stop offset="1" stop-color="#3a7af0"/></linearGradient></defs><path d="M10 31C-2 31-3 16 6 14c0-7 7-9 10-6 4-11 20-10 21 3 11 2 12 18-1 20z" fill="url(#cl)"/></svg></div>
        <div class="txt"><strong>Update Apple ID Settings</strong>Some account services will not be<br />available until you sign in again.</div>
        <button class="nv">View</button>
      </aside>
    </div>`;
  }
}
